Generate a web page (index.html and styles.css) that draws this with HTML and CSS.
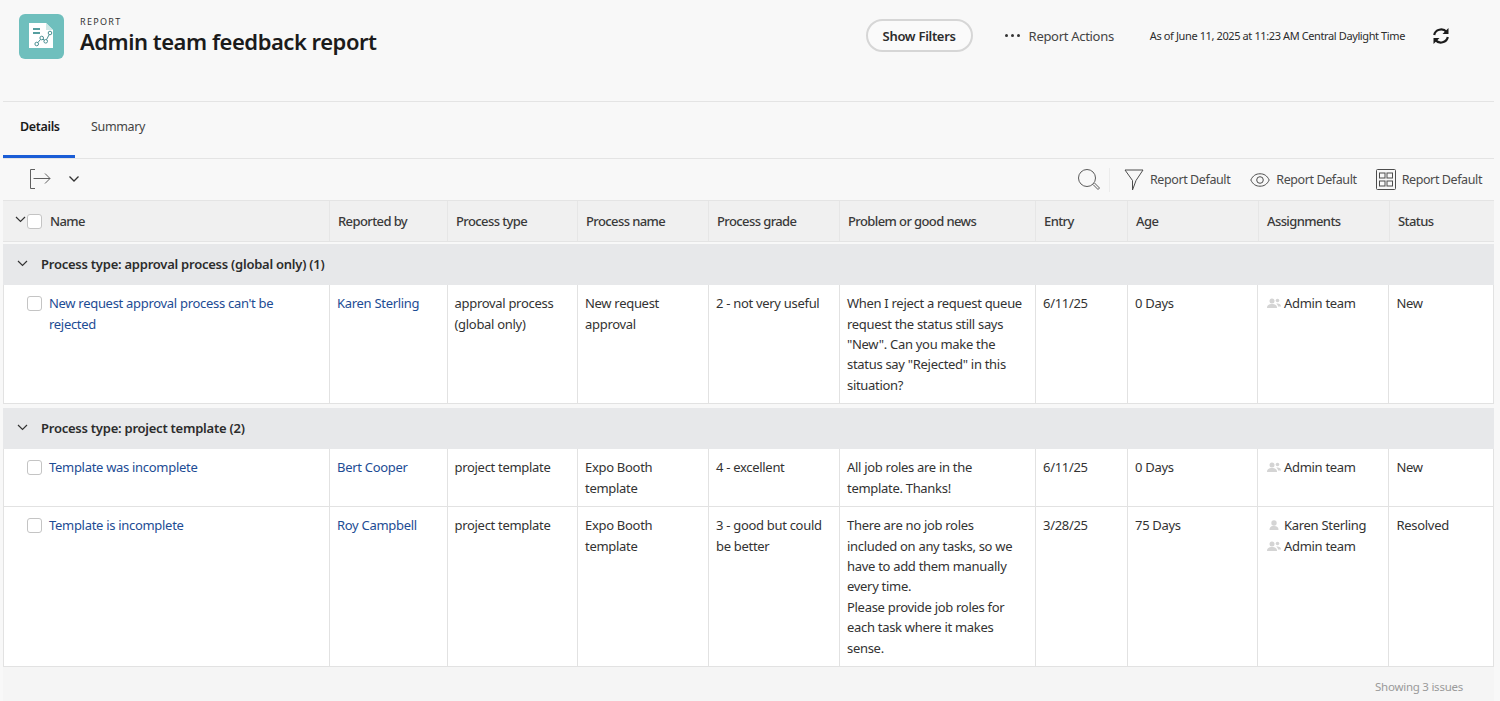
FILE: index.html
```html
<!DOCTYPE html>
<html lang="en">
<head>
<meta charset="utf-8">
<title>Admin team feedback report</title>
<link rel="stylesheet" href="styles.css">
</head>
<body>
<div class="page">
  <header class="header">
    <div class="logo">
      <svg width="45" height="45" viewBox="0 0 45 45">
        <path d="M10 9H27L34 16V34H10Z" fill="#fff"/>
        <path d="M27 9L34 16H27Z" fill="#cfe8e6"/>
        <path d="M14 15H21M14 19H21" stroke="#1f7f80" stroke-width="1.500"/>
        <g fill="none" stroke="#4a8f92" stroke-width="1"><circle cx="17.700" cy="30" r="1.800"/><circle cx="22.700" cy="24" r="1.800"/><circle cx="26.700" cy="27.300" r="1.800"/><circle cx="31" cy="19" r="1.800"/><path d="M18.900 28.600L21.500 25.400M24 25.200L25.400 26.200M27.500 25.700L30.200 20.600"/></g>
      </svg>
    </div>
    <div class="title-block">
      <div class="eyebrow">REPORT</div>
      <h1 class="title">Admin team feedback report</h1>
    </div>
    <div class="header-actions">
      <button class="filters-btn">Show Filters</button>
      <div class="actions-link"><span class="dots"><i></i><i></i><i></i></span>Report Actions</div>
      <div class="as-of">As of June 11, 2025 at 11:23 AM Central Daylight Time</div>
      <svg class="refresh" width="18" height="18" viewBox="0 0 18 18" fill="none" stroke="#1b1b1b" stroke-width="2.200">
        <path d="M2.2 8A7 6.6 0 0 1 14.6 5"/><path d="M15.8 10A7 6.6 0 0 1 3.4 13"/>
        <path d="M16.500 1V7H10.500Z" fill="#1b1b1b" stroke="none"/><path d="M1.500 17V11H7.500Z" fill="#1b1b1b" stroke="none"/>
      </svg>
    </div>
  </header>

  <nav class="tabs">
    <div class="tab tab-active">Details</div>
    <div class="tab">Summary</div>
  </nav>

  <div class="toolbar">
    <div class="export">
      <svg width="22" height="22" viewBox="0 0 22 22" fill="none" stroke="#5f5f5f" stroke-width="1">
        <path d="M6 1.5H1.5V20.5H6"/><path d="M4.500 10.500H21M16 5.500L21 10.500L16 15.500" stroke-width="1"/>
      </svg>
      <svg width="12" height="8" viewBox="0 0 12 8" fill="none" stroke="#333" stroke-width="1.300"><path d="M1.500 1.500L6 6L10.500 1.500"/></svg>
    </div>
    <div class="tools">
      <svg class="tool-search" width="24" height="24" viewBox="0 0 24 24" fill="none" stroke="#5a5a5a" stroke-width="1">
        <circle cx="10" cy="10" r="8.500"/><path d="M16 16.500L21 21.500L22.500 20L17.500 15"/>
      </svg>
      <span class="tool-sep"></span>
      <div class="tool tool-filter">
        <svg width="20" height="22" viewBox="0 0 20 22" fill="none" stroke="#4d4d4d" stroke-width="1"><path d="M1 1H19L12 11.500L8.500 21V11.500Z"/></svg>
        Report Default
      </div>
      <div class="tool tool-view">
        <svg width="20" height="16" viewBox="0 0 20 16" fill="none" stroke="#4d4d4d" stroke-width="1"><path d="M.8 8C3 3.500 6 1.800 10 1.800S17 3.500 19.200 8C17 12.500 14 14.200 10 14.200S3 12.500 .8 8Z"/><circle cx="10" cy="8" r="3.300"/></svg>
        Report Default
      </div>
      <div class="tool tool-group">
        <svg width="20" height="21" viewBox="0 0 20 21" fill="none" stroke="#4d4d4d" stroke-width="1"><rect x=".5" y=".5" width="19" height="20" rx="1"/><rect x="3.500" y="4" width="5.500" height="5"/><rect x="11" y="4" width="5.500" height="5"/><rect x="3.500" y="12" width="5.500" height="5"/><rect x="11" y="12" width="5.500" height="5"/></svg>
        Report Default
      </div>
    </div>
  </div>

  <div class="grid-row grid-head">
    <div class="cell name-head">
      <svg class="head-chev" width="11" height="7" viewBox="0 0 11 7" fill="none" stroke="#333" stroke-width="1.200"><path d="M1 1L5.500 5.500L10 1"/></svg>
      <span class="check"></span>
      <span class="name-label">Name</span>
    </div>
    <div class="cell">Reported by</div>
    <div class="cell">Process type</div>
    <div class="cell">Process name</div>
    <div class="cell">Process grade</div>
    <div class="cell">Problem or good news</div>
    <div class="cell">Entry</div>
    <div class="cell">Age</div>
    <div class="cell">Assignments</div>
    <div class="cell">Status</div>
  </div>

  <section class="group group-first">
    <div class="group-head">
      <svg width="11" height="7" viewBox="0 0 11 7" fill="none" stroke="#333" stroke-width="1.200"><path d="M1 1L5.500 5.500L10 1"/></svg>
      <span>Process type: approval process (global only) (1)</span>
    </div>
    <div class="grid-row row row-a">
      <div class="cell name-cell"><span class="check"></span><a class="link">New request approval process can't be rejected</a></div>
      <div class="cell"><a class="link">Karen Sterling</a></div>
      <div class="cell">approval process (global only)</div>
      <div class="cell">New request approval</div>
      <div class="cell">2 - not very useful</div>
      <div class="cell">When I reject a request queue request the status still says "New". Can you make the status say "Rejected" in this situation?</div>
      <div class="cell">6/11/25</div>
      <div class="cell">0 Days</div>
      <div class="cell"><div class="assignee"><svg class="ico-team" width="14" height="10" viewBox="0 0 14 10"><circle cx="5" cy="3" r="2.500"/><path d="M0 10C0 7 2 6 5 6S10 7 10 10Z"/><circle cx="10.500" cy="2.500" r="1.800"/><path d="M9 5.500C12 5 14 6 14 8.500H11C11 7 10 6 9 5.500Z"/></svg>Admin team</div></div>
      <div class="cell">New</div>
    </div>
  </section>

  <section class="group">
    <div class="group-head">
      <svg width="11" height="7" viewBox="0 0 11 7" fill="none" stroke="#333" stroke-width="1.200"><path d="M1 1L5.500 5.500L10 1"/></svg>
      <span>Process type: project template (2)</span>
    </div>
    <div class="grid-row row row-b">
      <div class="cell name-cell"><span class="check"></span><a class="link">Template was incomplete</a></div>
      <div class="cell"><a class="link">Bert Cooper</a></div>
      <div class="cell">project template</div>
      <div class="cell">Expo Booth template</div>
      <div class="cell">4 - excellent</div>
      <div class="cell">All job roles are in the template. Thanks!</div>
      <div class="cell">6/11/25</div>
      <div class="cell">0 Days</div>
      <div class="cell"><div class="assignee"><svg class="ico-team" width="14" height="10" viewBox="0 0 14 10"><circle cx="5" cy="3" r="2.500"/><path d="M0 10C0 7 2 6 5 6S10 7 10 10Z"/><circle cx="10.500" cy="2.500" r="1.800"/><path d="M9 5.500C12 5 14 6 14 8.500H11C11 7 10 6 9 5.500Z"/></svg>Admin team</div></div>
      <div class="cell">New</div>
    </div>
    <div class="grid-row row row-c">
      <div class="cell name-cell"><span class="check"></span><a class="link">Template is incomplete</a></div>
      <div class="cell"><a class="link">Roy Campbell</a></div>
      <div class="cell">project template</div>
      <div class="cell">Expo Booth template</div>
      <div class="cell">3 - good but could be better</div>
      <div class="cell">There are no job roles included on any tasks, so we have to add them manually every time.<br>Please provide job roles for each task where it makes sense.</div>
      <div class="cell">3/28/25</div>
      <div class="cell">75 Days</div>
      <div class="cell">
        <div class="assignee"><svg class="ico-team" width="14" height="10" viewBox="0 0 14 10"><circle cx="7" cy="3" r="2.700"/><path d="M2.500 10C2.500 7 4 6 7 6S11.500 7 11.500 10Z"/></svg>Karen Sterling</div>
        <div class="assignee"><svg class="ico-team" width="14" height="10" viewBox="0 0 14 10"><circle cx="5" cy="3" r="2.500"/><path d="M0 10C0 7 2 6 5 6S10 7 10 10Z"/><circle cx="10.500" cy="2.500" r="1.800"/><path d="M9 5.500C12 5 14 6 14 8.500H11C11 7 10 6 9 5.500Z"/></svg>Admin team</div>
      </div>
      <div class="cell">Resolved</div>
    </div>
  </section>

  <footer class="footer">Showing 3 issues</footer>
</div>
</body>
</html>
```

FILE: styles.css
```css
* { box-sizing: border-box; }
html, body { margin: 0; height: 100%; }
body {
  background: #f8f8f8;
  color: #2c2c2c;
  font-family: "Noto Sans", "Open Sans", sans-serif;
  font-size: 13px;
  letter-spacing: -.3px;
  overflow: hidden;
}
.page { width: 1491px; margin-left: 3px; }

.header {
  height: 102px;
  border-bottom: 1px solid #e4e4e4;
  display: flex;
  align-items: flex-start;
  padding: 14px 0 0 16px;
}
.logo {
  width: 45px;
  height: 45px;
  background: #6fbfbd;
  border-radius: 6px;
}
.logo svg { display: block; }
.title-block { margin-left: 16px; }
.eyebrow {
  font-size: 9px;
  letter-spacing: 1.3px;
  line-height: 12px;
  margin-top: 2px;
  color: #333;
}
.title {
  margin: -1px 0 0;
  font-size: 22px;
  line-height: 28px;
  font-weight: 600;
  letter-spacing: -.48px;
  color: #1b1b1b;
}
.header-actions {
  margin-left: auto;
  display: flex;
  align-items: center;
  padding-top: 5px;
  padding-right: 44px;
}
.filters-btn {
  width: 107px;
  height: 33px;
  background: #fafafa;
  border: 2px solid #d6d6d6;
  border-radius: 17px;
  font: 600 13px "Noto Sans", sans-serif;
  letter-spacing: -.3px;
  color: #2c2c2c;
  padding: 0;
}
.actions-link { display: flex; align-items: center; margin-left: 32px; color: #444; }
.dots { display: flex; gap: 3px; margin-right: 9px; }
.dots i { width: 3px; height: 3px; border-radius: 50%; background: #333; }
.as-of { margin-left: 36px; font-size: 11px; letter-spacing: -.39px; color: #2c2c2c; }
.refresh { margin-left: 27px; }

.tabs {
  height: 57px;
  display: flex;
  align-items: flex-start;
  border-bottom: 1px solid #e4e4e4;
}
.tab {
  padding: 0 16px;
  line-height: 50px;
  font-size: 12.500px;
  letter-spacing: -.35px;
  color: #444;
  height: 56px;
}
.tab-active {
  color: #1b1b1b;
  font-weight: 600;
  border-bottom: 3px solid #1a5dd6;
  width: 72px;
  padding-left: 17px;
}

.toolbar {
  height: 41px;
  display: flex;
  align-items: center;
  justify-content: space-between;
}
.export { display: flex; align-items: center; gap: 17px; margin-left: 26px; margin-top: -2px; }
.tools { display: flex; align-items: center; padding-right: 12px; color: #4b4b4b; font-size: 12.500px; letter-spacing: -.4px; }
.tool-search { margin-right: 8px; }
.tool-sep { width: 1px; height: 24px; background: #ececec; margin-right: 14px; }
.tool { display: flex; align-items: center; gap: 6px; }
.tool-view { margin-left: 20px; }
.tool-group { margin-left: 19px; }

.grid-row {
  display: grid;
  grid-template-columns: 326px 118px 130px 131px 131px 196px 92px 131px 131px 105px;
}
.grid-head {
  height: 42px;
  background: #f0f0f0;
  border-top: 1px solid #e4e4e4;
  border-bottom: 1px solid #e4e4e4;
  font-weight: 500;
  letter-spacing: -.6px;
  color: #3a3a3a;
}
.grid-head .cell {
  border-left: 1px solid #e6e6e6;
  padding: 0 0 0 8px;
  line-height: 40px;
}
.grid-head .name-head { border-left: 0; padding: 0; display: flex; align-items: center; position: relative; }
.head-chev { margin: -4px 0 0 12px; }
.name-head .check { margin-left: 1px; }
.name-label { margin-left: 8px; }

.check {
  flex: none;
  display: block;
  width: 15px;
  height: 15px;
  background: #fff;
  border: 1px solid #c4c4c4;
  border-radius: 3px;
}

.group { margin-top: 4px; }
.group-first { margin-top: 2px; }
.group-head {
  height: 41px;
  background: #e7e8ea;
  display: flex;
  align-items: center;
  padding-left: 14px;
  font-weight: 600;
  letter-spacing: -.24px;
  color: #2c2c2c;
  padding-bottom: 2px;
}
.group-head span { margin-left: 13px; }

.row {
  background: #fff;
  border-left: 1px solid #e2e2e2;
  border-right: 1px solid #e2e2e2;
  border-bottom: 1px solid #e2e2e2;
  line-height: 20.450px;
  color: #333;
  grid-template-columns: 325px 117.500px 130.500px 131px 131px 196px 92px 130px 131px 105px;
}
.row .cell { padding: 8.100px 10px 0 7px; border-left: 1px solid #e2e2e2; }
.row .cell:last-child { padding-left: 7.500px; }
.row .name-cell { border-left: 0; padding: 8.100px 40px 0 23px; display: flex; align-items: flex-start; }
.name-cell .check { margin: 3px 7px 0 0; }
.row-a { height: 119px; }
.row-b { height: 58px; }
.row-c { height: 160px; }
.link { color: #1d4c94; }

.assignee { display: flex; align-items: center; }
.ico-team { fill: #d4d4d4; margin: 0 3px 0 2px; flex: none; }

.footer {
  height: 35px;
  line-height: 40px;
  text-align: right;
  padding-right: 31px;
  font-size: 11.500px;
  letter-spacing: -.25px;
  color: #9a9a9a;
  background: #f5f5f5;
}
```
